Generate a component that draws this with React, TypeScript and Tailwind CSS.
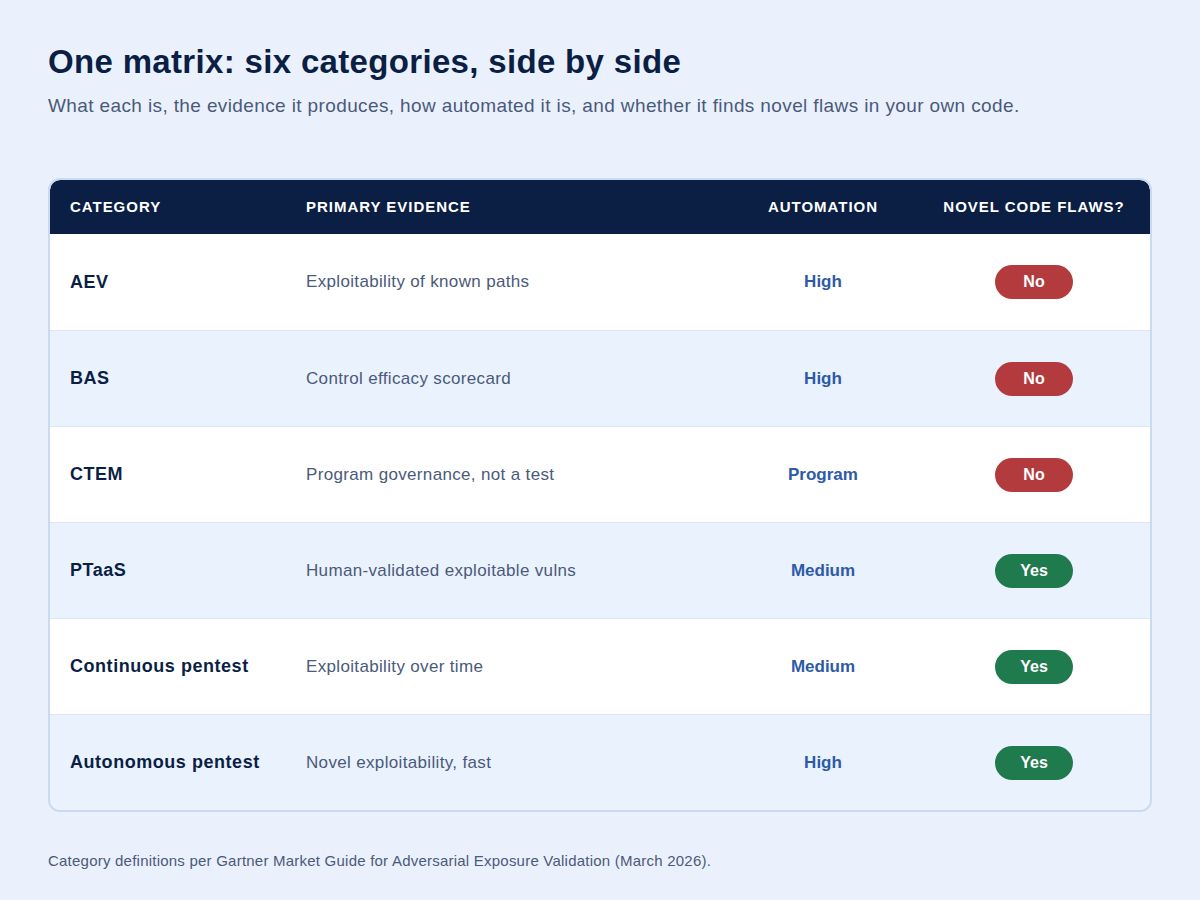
import React from 'react';

const rows = [
  { name: 'AEV', evidence: 'Exploitability of known paths', auto: 'High', novel: false },
  { name: 'BAS', evidence: 'Control efficacy scorecard', auto: 'High', novel: false },
  { name: 'CTEM', evidence: 'Program governance, not a test', auto: 'Program', novel: false },
  { name: 'PTaaS', evidence: 'Human-validated exploitable vulns', auto: 'Medium', novel: true },
  { name: 'Continuous pentest', evidence: 'Exploitability over time', auto: 'Medium', novel: true },
  { name: 'Autonomous pentest', evidence: 'Novel exploitability, fast', auto: 'High', novel: true },
];

const cols = 'grid grid-cols-[236px_1fr_190px_232px] items-center';

export default function App() {
  return (
    <div className="w-[1200px] h-[900px] bg-[#eaf1fd] px-[48px] pt-[44px] font-['Liberation_Sans',Arial,sans-serif]">
      <h1 className="text-[33px] leading-[36px] tracking-[0.01em] font-bold text-[#0b1f45]">One matrix: six categories, side by side</h1>
      <p className="mt-[14px] text-[19px] leading-[24px] tracking-[0.02em] text-[#4a5a7a]">What each is, the evidence it produces, how automated it is, and whether it finds novel flaws in your own code.</p>

      <div className="mt-[60px] rounded-[12px] border-2 border-[#c9daf1] overflow-hidden">
        <div className={`${cols} h-[54px] bg-[#0b1f45] text-white text-[15px] font-bold tracking-[0.065em] uppercase rounded-t-[10px]`}>
          <div className="pl-[20px]">Category</div>
          <div className="pl-[20px]">Primary evidence</div>
          <div className="text-center">Automation</div>
          <div className="text-center">Novel code flaws?</div>
        </div>
        {rows.map((r, i) => (
          <div key={r.name} className={`${cols} h-[96px] ${i % 2 === 0 ? 'bg-white' : 'bg-[#eaf2fe]'} ${i > 0 ? 'border-t border-[#dbe6f5]' : ''}`}>
            <div className="pl-[20px] text-[18px] tracking-[0.03em] font-bold text-[#0b1f45]">{r.name}</div>
            <div className="pl-[20px] text-[17px] tracking-[0.02em] text-[#4a5a7a]">{r.evidence}</div>
            <div className="text-center text-[17px] font-bold text-[#2e5aa8]">{r.auto}</div>
            <div className="flex justify-center">
              <span className={`w-[78px] h-[34px] rounded-full flex items-center justify-center text-white text-[16px] font-bold ${r.novel ? 'bg-[#1f7a4d]' : 'bg-[#b33b3d]'}`}>
                {r.novel ? 'Yes' : 'No'}
              </span>
            </div>
          </div>
        ))}
      </div>

      <p className="mt-[39px] text-[15px] leading-[20px] tracking-[0.015em] text-[#4a5a7a]">Category definitions per Gartner Market Guide for Adversarial Exposure Validation (March 2026).</p>
    </div>
  );
}
